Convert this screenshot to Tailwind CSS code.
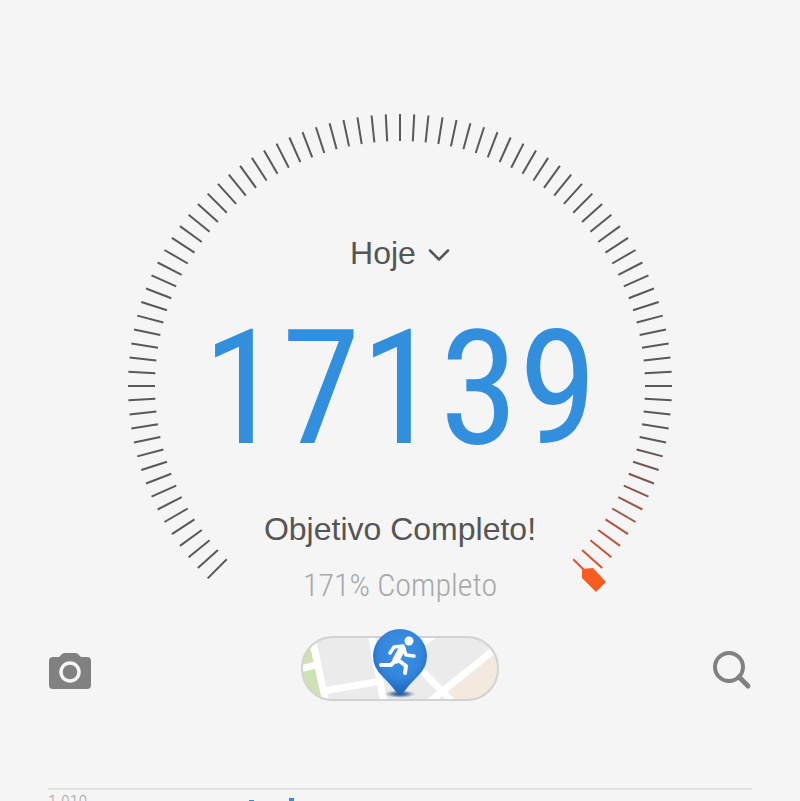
<!DOCTYPE html>
<html lang="pt-BR">
  <head>
    <meta charset="UTF-8" />
    <meta name="viewport" content="width=device-width, initial-scale=1.0" />
    <title>Passos</title>
    <script src="https://cdn.jsdelivr.net/npm/@tailwindcss/browser@4"></script>
  </head>

  <body class="bg-[#f5f5f5] font-['Liberation_Sans',Arial,sans-serif] text-[#555555]">
    <div class="flex flex-col h-screen overflow-hidden pt-28">
      <!-- Step gauge -->
      <main class="grid justify-items-center shrink-0">
        <svg class="col-start-1 row-start-1 w-[548px] max-w-full" viewBox="-274 -274 548 484" aria-hidden="true">
          <g id="ticks" stroke-width="2"></g>
          <path d="M182 183L193 182L206 196L196 206L182 192Z" fill="#f75c22" />
        </svg>

        <div class="col-start-1 row-start-1 flex flex-col items-center pt-[121px]">
          <button type="button" class="flex items-center gap-3 text-[32px] leading-10">
            Hoje
            <svg class="w-[22px] h-4 mt-1" viewBox="0 0 22 16" fill="none" stroke="currentColor" stroke-width="2.500" stroke-linecap="round" stroke-linejoin="round">
              <path d="M2 3.500L11 12.500L20 3.500" />
            </svg>
          </button>
          <h1 class="font-['Roboto_Condensed',Roboto,sans-serif] text-[160px] leading-[168px] mt-8 text-[#318fde]">17139</h1>
          <p class="text-[32px] leading-10 mt-9">Objetivo Completo!</p>
          <p class="font-['Roboto_Condensed',Roboto,sans-serif] font-light text-[32px] leading-10 mt-4 text-[#a8a8a8]">171% Completo</p>
        </div>
      </main>

      <!-- Actions -->
      <nav class="flex items-center justify-between shrink-0 px-12 mt-6">
        <button type="button" aria-label="Câmera">
          <svg class="w-11 h-10" viewBox="0 0 44 40">
            <path d="M5 6h6l3-3q1-1 3-1h10q2 0 3 1l3 3h6q4 0 4 4v24q0 4-4 4H5q-4 0-4-4V10q0-4 4-4Z" fill="#818181" />
            <circle cx="22" cy="21" r="9" fill="none" stroke="#f5f5f5" stroke-width="3.500" />
          </svg>
        </button>

        <button type="button" aria-label="Mapa">
          <svg class="w-[200px] h-[84px]" viewBox="0 2 200 84">
            <defs>
              <clipPath id="pill"><rect x="2" y="10" width="196" height="63" rx="31" /></clipPath>
              <radialGradient id="pin" cx="50%" cy="35%" r="65%">
                <stop offset="0" stop-color="#3f91e2" />
                <stop offset="0.600" stop-color="#3386dc" />
                <stop offset="1" stop-color="#1b62bd" />
              </radialGradient>
              <radialGradient id="shadow">
                <stop offset="0" stop-color="#164477" />
                <stop offset="0.500" stop-color="#3d6692" stop-opacity="0.700" />
                <stop offset="1" stop-color="#7896b8" stop-opacity="0" />
              </radialGradient>
            </defs>
            <g clip-path="url(#pill)">
              <rect width="200" height="76" fill="#ebebeb" />
              <path d="M0 24L10 20L24 76H0Z" fill="#cfe2b4" />
              <path d="M200 24L148 66L160 76H200Z" fill="#f3e9df" />
              <path d="M143 76L151 67L158 76Z" fill="#cfe2b4" />
              <g fill="none" stroke="#ffffff" stroke-width="7">
                <path d="M11 6L26 76M0 42L16 38M23 64L82 54M71 6L84 76" />
                <path d="M102 24L154 76M128 76L200 18M112 24L134 8" />
              </g>
            </g>
            <rect x="2" y="10" width="196" height="63" rx="31" fill="none" stroke="#d2d2d2" stroke-width="2" />
            <ellipse cx="100" cy="67" rx="16" ry="4" fill="url(#shadow)" />
            <path d="M100 68Q96 66 93 61Q90 57 83 50Q73 41 73 29A27 27 0 0 1 127 29Q127 41 117 50Q110 57 107 61Q104 66 100 68Z" fill="url(#pin)" />
            <circle cx="109" cy="14" r="4.500" fill="#ffffff" />
            <g fill="none" stroke="#ffffff" stroke-linecap="round" stroke-linejoin="round">
              <path d="M90 26L94 20L103 19L106 28L114 29" stroke-width="3.500" />
              <path d="M102 22L96 33" stroke-width="7" />
              <path d="M97 32L91 38H81M98 33L106 39L105 46" stroke-width="4" />
            </g>
          </svg>
        </button>

        <button type="button" aria-label="Buscar">
          <svg class="w-11 h-10" viewBox="-4 0 44 40" fill="none" stroke="#818181">
            <circle cx="17" cy="16" r="14" stroke-width="4" />
            <path d="M27 26L36 35" stroke-width="5" stroke-linecap="round" />
          </svg>
        </button>
      </nav>

      <!-- Daily chart, continues below the fold -->
      <section class="mx-12 mt-[75px] shrink-0 border-t-2 border-[#e2e2e2]">
        <div class="flex items-start pt-0.5">
          <span class="w-[196px] font-['Roboto_Condensed',Roboto,sans-serif] font-light text-lg leading-5 text-[#a8a8a8]">1.010</span>
          <svg class="w-14 h-10 mt-1.5" viewBox="0 0 56 40" fill="#318fde">
            <path d="M5 2h5v38H5zM18 3h5v37h-5zM45 0h5v40h-5z" />
          </svg>
        </div>
      </section>
    </div>

    <script>
      // One tick every 3 degrees, the last ten fade to orange
      const ticks = document.getElementById("ticks");
      for (let deg = -135; deg <= 135; deg += 3) {
        const t = Math.min(1, Math.max(0, (deg - 102) / 33));
        const line = document.createElementNS("http://www.w3.org/2000/svg", "line");
        line.setAttribute("y1", -245);
        line.setAttribute("y2", -272);
        line.setAttribute("transform", `rotate(${deg})`);
        line.setAttribute(
          "stroke",
          `rgb(${90 + 140 * t}, ${88 - 8 * t}, ${88 - 43 * t})`
        );
        ticks.appendChild(line);
      }
    </script>
  </body>
</html>
